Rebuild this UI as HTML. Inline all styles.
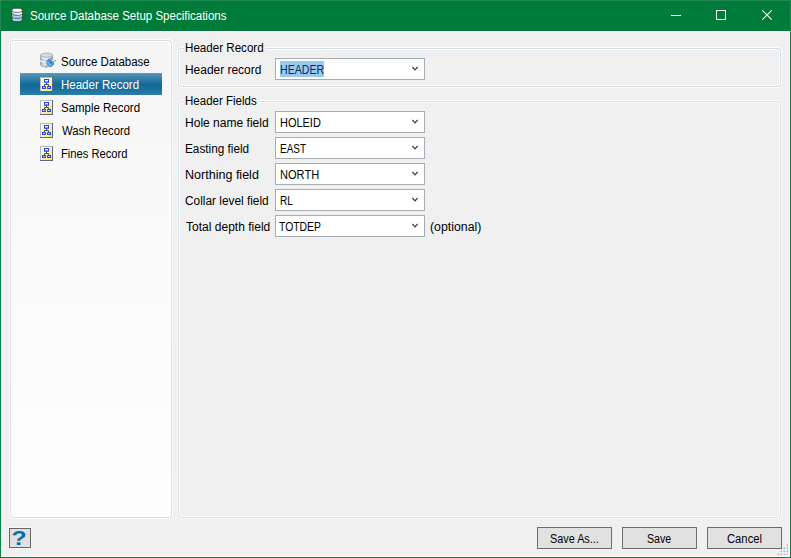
<!DOCTYPE html>
<html lang="en"><head><meta charset="utf-8"><title>Source Database Setup Specifications</title>
<style>
html,body{margin:0;padding:0}
html{background:#fff}
body{width:791px;height:558px;position:relative;overflow:hidden;background:#06803e;font:12px/16px "Liberation Sans",sans-serif;color:#000}
header,nav,main,section,footer,ul,li{display:block;margin:0;padding:0;list-style:none}
.titlebar{position:absolute;left:0;top:0;width:791px;height:31px;box-sizing:border-box;border:1px solid #1f8a4f;border-bottom:0;background:#007b3a}
.client{position:absolute;left:1px;top:31px;width:789px;height:526px;background:#f0f0f0;box-shadow:inset 1px 1px 0 #fdfbfd, inset -1px -1px 0 #fdfbfd}
.t{position:absolute;white-space:pre;transform-origin:0 0;font-size:12px;line-height:16px;font-weight:normal;margin:0}
.gb{position:absolute;border:1px solid #d3dde5;border-radius:3.500px;box-shadow:inset 0 0 0 1px rgba(255,255,255,.85), 0 0 0 1px rgba(255,255,255,.85);box-sizing:border-box}
.side{left:10px;top:40px;width:162px;height:478px;background:linear-gradient(#f5f5f5 0%,#fafafa 45%,#fefefe 100%)}
.sel{position:absolute;left:20px;top:73px;width:142px;height:22px;background:linear-gradient(#5b9bbc 0%,#3f86ab 18%,#116a9a 52%,#1b719e 75%,#2e7fa8 100%)}
.combo{position:absolute;left:275px;width:150px;height:22px;box-sizing:border-box;border:1px solid #a8abb4;background:#fff}
.chev{position:absolute;left:135px;top:7px}
.hl{position:absolute;left:280px;top:61px;width:44px;height:16px;background:#99c9ef}
.btn{position:absolute;top:527px;width:75px;height:22px;box-sizing:border-box;border:1px solid #6d6d6d;background:#e1e1e1}
.ico{position:absolute;left:40px}
.gd{position:absolute;width:1px;height:1px;margin:1px 0 0 1px;background:#aab6cb;box-shadow:-1px 0 0 #c6cfdc,0 -1px 0 #c6cfdc,-1px -1px 0 #e6e9ee}
.legend{position:absolute;background:#f0f0f0;height:4px}
.helpbox{position:absolute;left:9px;top:528px;width:22px;height:20px;box-sizing:border-box;border:1px solid #666;background:#e0e0e0;box-shadow:0 0 0 1px rgba(255,255,255,.4)}
.helpq{position:absolute;left:11px;top:527.500px;width:16px;text-align:center;font:bold 19px/22px "Liberation Sans",sans-serif;color:#0a6fa8;transform:scale(1.3,1.07)}
</style></head><body>
<!-- window title bar -->
<header>
<div class="titlebar"></div>
<svg style="position:absolute;left:11px;top:7px" width="13" height="16" viewBox="0 0 13 16">
<defs><linearGradient id="tb1" x1="0" y1="1" x2="1" y2="0"><stop offset="0" stop-color="#a9d3ea"/><stop offset=".2" stop-color="#a9d3ea"/><stop offset=".42" stop-color="#fff"/><stop offset="1" stop-color="#fff"/></linearGradient>
<linearGradient id="tb2" x1="0" y1="1" x2="1" y2="0"><stop offset="0" stop-color="#a9d3ea"/><stop offset=".55" stop-color="#a9d3ea"/><stop offset=".75" stop-color="#fff"/><stop offset="1" stop-color="#fff"/></linearGradient></defs>
<path d="M.9 3.300v9.400c0 1.300 2.300 2.200 5.200 2.200s5.200-.9 5.200-2.200v-9.400z" fill="#a6d2ea" stroke="#3c4340" stroke-width="1.1"/>
<path d="M1.400 3.300v6.100c0 1.100 2.100 1.900 4.700 1.900s4.700-.8 4.700-1.900v-6.100z" fill="url(#tb2)"/>
<path d="M1.400 3.300v3.100c0 1.100 2.100 1.900 4.700 1.900s4.700-.8 4.700-1.900v-3.100z" fill="url(#tb1)"/>
<path d="M.9 6.400c0 1.200 2.300 2 5.200 2s5.200-.8 5.200-2M.9 9.400c0 1.200 2.300 2 5.200 2s5.200-.8 5.200-2" fill="none" stroke="#5a5f5e" stroke-width=".9"/>
<ellipse cx="6.100" cy="3.300" rx="5.200" ry="2.100" fill="#fdfdfd" stroke="#4f5653" stroke-width=".9"/>
</svg>
<h1 class="t" style="left:29.84px;top:8px;color:#fff;transform:scaleX(0.9594)">Source Database Setup Specifications</h1>
<svg style="position:absolute;left:660px;top:0" width="130" height="31" viewBox="0 0 130 31">
<path d="M11 15.500h10" stroke="#fff" stroke-width="1"/>
<rect x="56.500" y="10.500" width="9" height="9" fill="none" stroke="#fff" stroke-width="1"/>
<path d="M102.300 10.300l9.400 9.400M111.700 10.300l-9.400 9.400" stroke="#fff" stroke-width="1.100"/>
</svg>
</header>
<div class="client"></div>
<!-- left navigation list -->
<nav>
<div class="gb side"></div>
<div class="sel"></div>
<ul>
<li><svg style="position:absolute;left:39px;top:52px" width="18" height="17" viewBox="0 0 18 17">
<defs><linearGradient id="cg" x1="0" y1="0" x2="1" y2="0"><stop offset="0" stop-color="#a3abb2"/><stop offset=".3" stop-color="#e2e5e8"/><stop offset=".65" stop-color="#c6cbd0"/><stop offset="1" stop-color="#9fa7ae"/></linearGradient>
<linearGradient id="pg" x1="0" y1="1" x2="1" y2="0"><stop offset="0" stop-color="#8ccaf4"/><stop offset="1" stop-color="#2f80d4"/></linearGradient></defs>
<path d="M1.500 3.200v9.500c0 1.200 2.700 2 6.100 2s6.100-.8 6.100-2v-9.500z" fill="url(#cg)" stroke="#9aa2a9" stroke-width=".9"/>
<path d="M1.500 8c0 1.200 2.700 2 6.100 2s6.100-.8 6.100-2" fill="none" stroke="#fbfcfc" stroke-width="1.200"/>
<path d="M1.500 7.100c0 1.200 2.700 2 6.100 2s6.100-.8 6.100-2" fill="none" stroke="#a9b0b6" stroke-width=".7"/>
<ellipse cx="7.600" cy="3.200" rx="6.100" ry="2.100" fill="#d9dde0" stroke="#a2a9b0" stroke-width=".9"/>
<path d="M1.800 4.900c.8 1 3.100 1.600 5.800 1.600s5-.6 5.800-1.600" fill="none" stroke="#f4f6f7" stroke-width="1"/>
<path d="M11.600 6.800l2-1.600M14.600 9.800l2-1.400M8.200 13.600l-1.500 2.200" stroke="#808488" stroke-width="1.300" stroke-dasharray="1 .5"/>
<path d="M10.400 6.900l4.300 3.900c.3 2-1.500 3.900-3.700 4l-3.300-3.100c-.2-2.200.9-4.100 2.700-4.800z" fill="url(#pg)" stroke="#2a7fd0" stroke-width=".7"/>
<path d="M9.200 8.400l4.300 4" stroke="#2368b8" stroke-width="1"/>
</svg><span class="t" style="left:61.24px;top:54px;transform:scaleX(0.9571)">Source Database</span></li>
<li><svg class="ico" style="top:77px" width="13" height="15" viewBox="0 0 13 15">
<defs><linearGradient id="yg77" x1="0" y1="0" x2="1" y2="1"><stop offset="0" stop-color="#ffffff"/><stop offset=".4" stop-color="#fffad2"/><stop offset="1" stop-color="#ffdf55"/></linearGradient></defs>
<rect x="0" y="0" width="13" height="15" fill="#5f6684"/>
<rect x="0" y="0" width="12" height="14" fill="#b4bacb"/>
<rect x="1" y="1" width="11" height="13" fill="url(#yg77)"/>
<path d="M6.500 5.500v2M4.500 9.200v-1.700h4v1.700" stroke="#4a5060" stroke-width="1" fill="none"/>
<rect x="4" y="2" width="5" height="3.800" fill="#2246d6"/><rect x="5" y="3" width="3" height="1.500" fill="#e8eeff"/>
<rect x="2" y="9" width="3.900" height="3" fill="#2246d6"/><rect x="3" y="10" width="2" height="1" fill="#bccaff"/>
<rect x="7.100" y="9" width="3.900" height="3" fill="#2246d6"/><rect x="8" y="10" width="2" height="1" fill="#bccaff"/>
</svg><span class="t" style="left:60.94px;top:77px;color:#fff;transform:scaleX(0.9591)">Header Record</span></li>
<li><svg class="ico" style="top:100px" width="13" height="15" viewBox="0 0 13 15">
<defs><linearGradient id="yg100" x1="0" y1="0" x2="1" y2="1"><stop offset="0" stop-color="#ffffff"/><stop offset=".4" stop-color="#fffad2"/><stop offset="1" stop-color="#ffdf55"/></linearGradient></defs>
<rect x="0" y="0" width="13" height="15" fill="#5f6684"/>
<rect x="0" y="0" width="12" height="14" fill="#b4bacb"/>
<rect x="1" y="1" width="11" height="13" fill="url(#yg100)"/>
<path d="M6.500 5.500v2M4.500 9.200v-1.700h4v1.700" stroke="#4a5060" stroke-width="1" fill="none"/>
<rect x="4" y="2" width="5" height="3.800" fill="#2246d6"/><rect x="5" y="3" width="3" height="1.500" fill="#e8eeff"/>
<rect x="2" y="9" width="3.900" height="3" fill="#2246d6"/><rect x="3" y="10" width="2" height="1" fill="#bccaff"/>
<rect x="7.100" y="9" width="3.900" height="3" fill="#2246d6"/><rect x="8" y="10" width="2" height="1" fill="#bccaff"/>
</svg><span class="t" style="left:61.24px;top:100px;transform:scaleX(0.9556)">Sample Record</span></li>
<li><svg class="ico" style="top:123px" width="13" height="15" viewBox="0 0 13 15">
<defs><linearGradient id="yg123" x1="0" y1="0" x2="1" y2="1"><stop offset="0" stop-color="#ffffff"/><stop offset=".4" stop-color="#fffad2"/><stop offset="1" stop-color="#ffdf55"/></linearGradient></defs>
<rect x="0" y="0" width="13" height="15" fill="#5f6684"/>
<rect x="0" y="0" width="12" height="14" fill="#b4bacb"/>
<rect x="1" y="1" width="11" height="13" fill="url(#yg123)"/>
<path d="M6.500 5.500v2M4.500 9.200v-1.700h4v1.700" stroke="#4a5060" stroke-width="1" fill="none"/>
<rect x="4" y="2" width="5" height="3.800" fill="#2246d6"/><rect x="5" y="3" width="3" height="1.500" fill="#e8eeff"/>
<rect x="2" y="9" width="3.900" height="3" fill="#2246d6"/><rect x="3" y="10" width="2" height="1" fill="#bccaff"/>
<rect x="7.100" y="9" width="3.900" height="3" fill="#2246d6"/><rect x="8" y="10" width="2" height="1" fill="#bccaff"/>
</svg><span class="t" style="left:61.64px;top:123px;transform:scaleX(0.9411)">Wash Record</span></li>
<li><svg class="ico" style="top:146px" width="13" height="15" viewBox="0 0 13 15">
<defs><linearGradient id="yg146" x1="0" y1="0" x2="1" y2="1"><stop offset="0" stop-color="#ffffff"/><stop offset=".4" stop-color="#fffad2"/><stop offset="1" stop-color="#ffdf55"/></linearGradient></defs>
<rect x="0" y="0" width="13" height="15" fill="#5f6684"/>
<rect x="0" y="0" width="12" height="14" fill="#b4bacb"/>
<rect x="1" y="1" width="11" height="13" fill="url(#yg146)"/>
<path d="M6.500 5.500v2M4.500 9.200v-1.700h4v1.700" stroke="#4a5060" stroke-width="1" fill="none"/>
<rect x="4" y="2" width="5" height="3.800" fill="#2246d6"/><rect x="5" y="3" width="3" height="1.500" fill="#e8eeff"/>
<rect x="2" y="9" width="3.900" height="3" fill="#2246d6"/><rect x="3" y="10" width="2" height="1" fill="#bccaff"/>
<rect x="7.100" y="9" width="3.900" height="3" fill="#2246d6"/><rect x="8" y="10" width="2" height="1" fill="#bccaff"/>
</svg><span class="t" style="left:61.17px;top:146px;transform:scaleX(0.9318)">Fines Record</span></li>
</ul>
</nav>
<main>
<!-- group: Header Record -->
<section>
<div class="gb" style="left:178px;top:48px;width:603px;height:39px"></div>
<div class="legend" style="left:184px;top:46px;width:82px"></div>
<span class="t" style="left:184.73px;top:40px;transform:scaleX(0.9666)">Header Record</span>
<label class="t" style="left:184.71px;top:62px;transform:scaleX(0.9947)">Header record</label>
<div class="combo" style="top:58px"><svg class="chev" width="9" height="6" viewBox="0 0 9 6"><path d="M1.400 1 L4 3.800 L6.600 1" fill="none" stroke="#3c3c3c" stroke-width="1.2"/></svg></div><div class="hl"></div><span class="t" style="left:280.32px;top:62px;color:#0b2a5c;transform:scaleX(0.8816)">HEADER</span>
</section>
<!-- group: Header Fields -->
<section>
<div class="gb" style="left:178px;top:101px;width:603px;height:417px"></div>
<div class="legend" style="left:184px;top:99px;width:75px"></div>
<span class="t" style="left:184.74px;top:93px;transform:scaleX(0.9597)">Header Fields</span>
<label class="t" style="left:184.80px;top:115px;transform:scaleX(1.0029)">Hole name field</label><div class="combo" style="top:111px"><svg class="chev" width="9" height="6" viewBox="0 0 9 6"><path d="M1.400 1 L4 3.800 L6.600 1" fill="none" stroke="#3c3c3c" stroke-width="1.2"/></svg></div><span class="t" style="left:280.29px;top:115px;transform:scaleX(0.9140)">HOLEID</span>
<label class="t" style="left:184.82px;top:141px;transform:scaleX(0.9802)">Easting field</label><div class="combo" style="top:137px"><svg class="chev" width="9" height="6" viewBox="0 0 9 6"><path d="M1.400 1 L4 3.800 L6.600 1" fill="none" stroke="#3c3c3c" stroke-width="1.2"/></svg></div><span class="t" style="left:280.37px;top:141px;transform:scaleX(0.8300)">EAST</span>
<label class="t" style="left:184.86px;top:167px;transform:scaleX(1.0449)">Northing field</label><div class="combo" style="top:163px"><svg class="chev" width="9" height="6" viewBox="0 0 9 6"><path d="M1.400 1 L4 3.800 L6.600 1" fill="none" stroke="#3c3c3c" stroke-width="1.2"/></svg></div><span class="t" style="left:280.28px;top:167px;transform:scaleX(0.9221)">NORTH</span>
<label class="t" style="left:185.15px;top:193px;transform:scaleX(0.9875)">Collar level field</label><div class="combo" style="top:189px"><svg class="chev" width="9" height="6" viewBox="0 0 9 6"><path d="M1.400 1 L4 3.800 L6.600 1" fill="none" stroke="#3c3c3c" stroke-width="1.2"/></svg></div><span class="t" style="left:280.36px;top:193px;transform:scaleX(0.8429)">RL</span>
<label class="t" style="left:185.58px;top:219px;transform:scaleX(1.0029)">Total depth field</label><div class="combo" style="top:215px"><svg class="chev" width="9" height="6" viewBox="0 0 9 6"><path d="M1.400 1 L4 3.800 L6.600 1" fill="none" stroke="#3c3c3c" stroke-width="1.2"/></svg></div><span class="t" style="left:279.49px;top:219px;transform:scaleX(0.8652)">TOTDEP</span>
<span class="t" style="left:429.57px;top:219px;transform:scaleX(1.0266)">(optional)</span>
</section>
</main>
<!-- bottom bar -->
<footer>
<div class="helpbox"></div><span class="helpq">?</span>
<div class="btn" style="left:537px"></div><span class="t" style="left:550.00px;top:531px;transform:scaleX(0.9038)">Save As...</span>
<div class="btn" style="left:622px"></div><span class="t" style="left:647.22px;top:531px;transform:scaleX(0.8846)">Save</span>
<div class="btn" style="left:707px"></div><span class="t" style="left:726.88px;top:531px;transform:scaleX(0.9370)">Cancel</span>
<i class="gd" style="left:786px;top:553px"></i><i class="gd" style="left:783px;top:553px"></i><i class="gd" style="left:780px;top:553px"></i><i class="gd" style="left:777px;top:553px"></i><i class="gd" style="left:786px;top:550px"></i><i class="gd" style="left:783px;top:550px"></i><i class="gd" style="left:780px;top:550px"></i><i class="gd" style="left:786px;top:547px"></i><i class="gd" style="left:783px;top:547px"></i><i class="gd" style="left:786px;top:544px"></i>
</footer>
</body></html>
